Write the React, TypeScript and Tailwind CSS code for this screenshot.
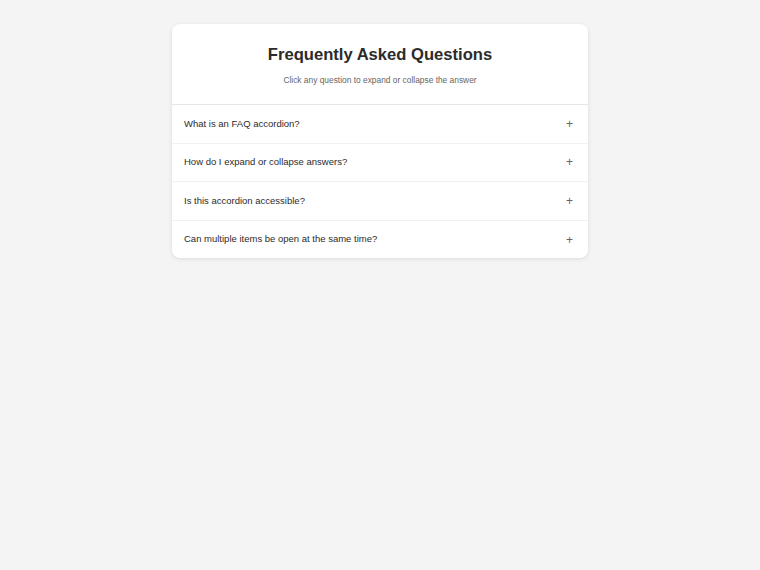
import { useState } from "react";

const faqs = [
  {
    q: "What is an FAQ accordion?",
    a: "An FAQ accordion is a list of questions where each answer can be shown or hidden by clicking its question.",
  },
  {
    q: "How do I expand or collapse answers?",
    a: "Click a question to open its answer. Click it again to close it.",
  },
  {
    q: "Is this accordion accessible?",
    a: "Yes. Each question is a button with aria-expanded, so it works with the keyboard and screen readers.",
  },
  {
    q: "Can multiple items be open at the same time?",
    a: "Yes, each item opens and closes on its own.",
  },
];

export default function App() {
  const [open, setOpen] = useState<number[]>([]);

  const toggle = (i: number) =>
    setOpen((cur) => (cur.includes(i) ? cur.filter((x) => x !== i) : [...cur, i]));

  return (
    <div className="min-h-[570px] bg-[#f4f4f4] pt-6 font-['Liberation_Sans',Arial,sans-serif]">
      <div className="mx-auto w-[416px] overflow-hidden rounded-lg bg-white shadow-[0_1px_4px_rgba(0,0,0,0.1)]">
        <header className="border-b border-[#e6e6e6] px-4 pb-[18px] pt-[21px] text-center">
          <h1 className="text-[16.6px] font-bold leading-5 text-[#2b2b2b]">
            Frequently Asked Questions
          </h1>
          <p className="mt-[9px] text-[8.4px] leading-3 text-[#666]">
            Click any question to expand or collapse the answer
          </p>
        </header>
        <ul>
          {faqs.map((item, i) => {
            const isOpen = open.includes(i);
            return (
              <li key={item.q} className="border-b border-[#f1f1f1] last:border-b-0">
                <button
                  type="button"
                  aria-expanded={isOpen}
                  onClick={() => toggle(i)}
                  className="flex h-[37.6px] w-full items-center justify-between pl-3 pr-[15px] text-left"
                >
                  <span className="text-[9.5px] text-[#2b2b2b]">{item.q}</span>
                  <span className="text-[12px] leading-none text-[#666]" aria-hidden>
                    {isOpen ? "−" : "+"}
                  </span>
                </button>
                {isOpen && (
                  <p className="px-3 pb-3 text-[9.5px] leading-relaxed text-[#666]">{item.a}</p>
                )}
              </li>
            );
          })}
        </ul>
      </div>
    </div>
  );
}
